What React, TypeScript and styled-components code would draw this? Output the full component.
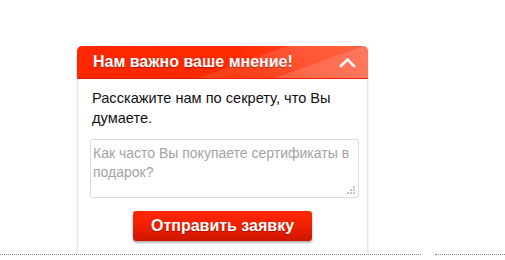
import React from 'react';
import styled, { createGlobalStyle } from 'styled-components';

const GlobalStyle = createGlobalStyle`
  html, body {
    margin: 0;
    padding: 0;
    background: #ffffff;
    font-family: Arial, "Liberation Sans", sans-serif;
  }
`;

const Page = styled.div`
  width: 505px;
  height: 260px;
  display: flex;
  flex-direction: column;
  overflow: hidden;
`;

const Stage = styled.div`
  height: 208px;
  padding: 46px 0 0 77px;
  overflow: hidden;
`;

const Card = styled.div`
  width: 291px;
  height: 240px;
  box-sizing: border-box;
  border-left: 1px solid #e6e6e6;
  border-right: 1px solid #e6e6e6;
  border-radius: 5px 5px 0 0;
  background: #fff;
  box-shadow: 1px 0 0 #f3f3f3, -1px 0 0 #f6f6f6;
`;

const Header = styled.div`
  height: 33px;
  margin: 0 -1px;
  border-radius: 5px 5px 0 0;
  display: flex;
  align-items: center;
  justify-content: space-between;
  padding: 0 12px 0 16px;
  background:
    linear-gradient(160deg, rgba(255, 255, 255, 0) 55%, rgba(255, 255, 255, 0.12) 56%, rgba(255, 255, 255, 0.05) 75%, rgba(255, 255, 255, 0.18) 76%),
    linear-gradient(90deg, #ff2600 0%, #ff2a00 55%, #ff4a26 80%, #ff5a3a 100%);
  border-bottom: 1px solid #e82000;
  box-sizing: border-box;
`;

const Title = styled.span`
  color: #fff;
  font-weight: bold;
  font-size: 16px;
  text-shadow: 0 1px 1px rgba(120, 0, 0, 0.55);
`;

const Body = styled.div`
  padding: 9px 8px 0 12px;
  display: flex;
  flex-direction: column;
`;

const Lead = styled.p`
  margin: 0 0 0 2px;
  font-size: 14.6px;
  line-height: 20px;
  color: #111;
`;

const Field = styled.div`
  position: relative;
  margin-top: 11px;
  width: 269px;
  height: 59px;
  box-sizing: border-box;
  border: 1px solid #dcdcdc;
  border-radius: 2px;
`;

const TextArea = styled.textarea`
  display: block;
  width: 100%;
  height: 100%;
  box-sizing: border-box;
  border: none;
  outline: none;
  resize: none;
  padding: 4px 6px 0 2px;
  font-family: Arial, "Liberation Sans", sans-serif;
  font-size: 14px;
  line-height: 19px;
  color: #333;
  background: transparent;
  &::placeholder {
    color: #a3a3a3;
  }
`;

const Grip = styled.svg`
  position: absolute;
  right: 2px;
  bottom: 2px;
`;

const Actions = styled.div`
  display: flex;
  justify-content: flex-start;
  padding: 13px 0 0 43px;
`;

const SubmitButton = styled.button`
  width: 179px;
  height: 30px;
  border: none;
  border-radius: 3px;
  background: linear-gradient(180deg, #ff2800 0%, #f02000 50%, #cc1600 100%);
  box-shadow: 0 2px 2px rgba(0, 0, 0, 0.3);
  color: #fff;
  font-family: Arial, "Liberation Sans", sans-serif;
  font-weight: bold;
  font-size: 16px;
  text-shadow: 0 1px 1px rgba(110, 0, 0, 0.5);
  cursor: pointer;
  padding: 0;
`;

const Divider = styled.div`
  display: flex;
  gap: 14px;
`;

const Dots = styled.div<{ $w: number }>`
  width: ${p => p.$w}px;
  border-top: 1px dotted #8a8a8a;
`;

const Chevron = () => (
  <svg width="17" height="11" viewBox="0 0 17 11">
    <path d="M2 9 L8.5 2.5 L15 9" fill="none" stroke="#fff" strokeWidth="2.6" strokeLinecap="square" />
  </svg>
);

export default function App() {
  return (
    <Page>
      <GlobalStyle />
      <Stage>
        <Card>
          <Header>
            <Title>Нам важно ваше мнение!</Title>
            <Chevron />
          </Header>
          <Body>
            <Lead>Расскажите нам по секрету, что Вы думаете.</Lead>
            <Field>
              <TextArea placeholder="Как часто Вы покупаете сертификаты в подарок?" />
              <Grip width="9" height="9" viewBox="0 0 9 9">
                <rect x="6" y="0" width="2" height="2" fill="#c4c4c4" />
                <rect x="3" y="3" width="2" height="2" fill="#c4c4c4" />
                <rect x="6" y="3" width="2" height="2" fill="#c4c4c4" />
                <rect x="0" y="6" width="2" height="2" fill="#c4c4c4" />
                <rect x="3" y="6" width="2" height="2" fill="#c4c4c4" />
                <rect x="6" y="6" width="2" height="2" fill="#c4c4c4" />
              </Grip>
            </Field>
            <Actions>
              <SubmitButton>Отправить заявку</SubmitButton>
            </Actions>
          </Body>
        </Card>
      </Stage>
      <Divider>
        <Dots $w={421} />
        <Dots $w={70} />
      </Divider>
    </Page>
  );
}
